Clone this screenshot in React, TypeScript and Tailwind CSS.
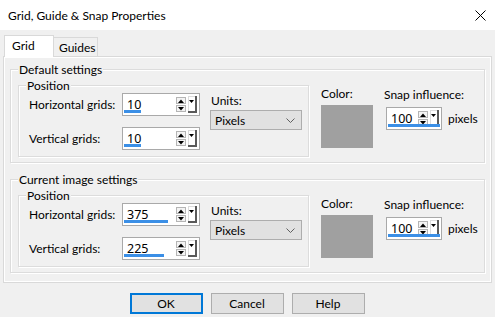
import React from "react";

const FONT = "font-['Lato',_'Liberation_Sans',_sans-serif]";

function UpDown() {
  return (
    <div className="flex flex-col gap-[1px] pt-[3px]">
      <div className="flex h-[7px] w-[10px] items-center justify-center border border-[#b5b5b5] bg-[#f4f4f4]">
        <svg width="6" height="4" viewBox="0 0 6 4"><path d="M0 4 L3 0.5 L6 4 Z" fill="#000" /></svg>
      </div>
      <div className="flex h-[7px] w-[10px] items-center justify-center border border-[#b5b5b5] bg-[#f4f4f4]">
        <svg width="6" height="4" viewBox="0 0 6 4"><path d="M0 0 L3 3.5 L6 0 Z" fill="#000" /></svg>
      </div>
    </div>
  );
}

function DropBtn() {
  return (
    <div className="mt-[2px] flex h-[17px] w-[9px] items-start justify-center border-b-2 border-r-2 border-[#5a5a5a] bg-white pt-[4px] shadow-[inset_1px_1px_0_#dcdcdc]">
      <svg width="5" height="3" viewBox="0 0 5 3"><path d="M0 0 L2.5 3 L5 0 Z" fill="#000" /></svg>
    </div>
  );
}

function Spin({ value, w, bar }: { value: string; w: string; bar: string }) {
  return (
    <div className={`relative flex h-[23px] shrink-0 items-start border border-[#a9a9a9] bg-white pr-[2px] ${w}`}>
      <div className="flex-1 pl-[4px] pt-[3px] font-['Noto_Sans',_sans-serif] text-[12.5px] leading-[16px] text-black">{value}</div>
      <UpDown />
      <div className="w-[2px]" />
      <DropBtn />
      <div className={`absolute bottom-[2px] left-[1px] h-[3px] bg-[#3b8fe6] ${bar}`} />
    </div>
  );
}

function Group({ title, children, className = "" }: { title: string; children: React.ReactNode; className?: string }) {
  return (
    <div className={`border border-[#dcdcdc] shadow-[inset_1px_1px_0_#fff,1px_1px_0_#fff] ${className}`}>
      <div className="-mt-[8px] ml-[7px] flex">
        <span className="whitespace-nowrap bg-[#f0f0f0] px-[1px] text-[12px] leading-[15px]">{title}</span>
      </div>
      {children}
    </div>
  );
}

function Settings({ title, h, v, hb, vb }: { title: string; h: string; v: string; hb: string; vb: string }) {
  return (
    <Group title={title} className="h-[94px]">
      <div className="flex">
        <Group title="Position" className="ml-[7px] mt-[8px] h-[72px] w-[291px] shrink-0">
          <div className="flex pl-[10px]">
            <div className="flex flex-col">
              <div className="flex items-center">
                <span className="w-[93px] whitespace-nowrap text-[12px] leading-[15px]">Horizontal grids:</span>
                <Spin value={h} w="w-[78px]" bar={hb} />
              </div>
              <div className="mt-[11px] flex items-center">
                <span className="w-[93px] whitespace-nowrap text-[12px] leading-[15px]">Vertical grids:</span>
                <Spin value={v} w="w-[78px]" bar={vb} />
              </div>
            </div>
            <div className="ml-[10px] flex flex-col">
              <div className="h-[17px] pl-[1px] text-[12px] leading-[15px]">Units:</div>
              <div className="flex h-[20px] w-[92px] items-center justify-between border border-[#adadad] bg-[#e1e1e1] pl-[4px] pr-[6px]">
                <span className="text-[12px] leading-[15px]">Pixels</span>
                <svg width="9" height="5" viewBox="0 0 9 5"><path d="M0.5 0.5 L4.5 4.5 L8.5 0.5" fill="none" stroke="#606060" strokeWidth="1" /></svg>
              </div>
            </div>
          </div>
        </Group>
        <div className="ml-[12px] mt-[9px] flex flex-col">
          <div className="h-[19px] text-[12px] leading-[15px]">Color:</div>
          <div className="h-[43px] w-[52px] bg-[#a0a0a0]" />
        </div>
        <div className="ml-[11px] mt-[10px] flex flex-col">
          <div className="h-[20px] whitespace-nowrap text-[12px] leading-[15px]">Snap influence:</div>
          <div className="ml-[2px] flex items-center">
            <Spin value="100" w="w-[56px]" bar="w-[52px]" />
            <span className="ml-[6px] text-[12px] leading-[15px]">pixels</span>
          </div>
        </div>
      </div>
    </Group>
  );
}

function Button({ label, primary }: { label: string; primary?: boolean }) {
  return (
    <div
      className={`flex h-[21px] w-[73px] items-center justify-center bg-[#e1e1e1] text-[12px] leading-[15px] ${
        primary ? "border-2 border-[#0078d7]" : "border border-[#adadad]"
      }`}
    >
      {label}
    </div>
  );
}

export default function App() {
  return (
    <div className={`flex h-[317px] w-[495px] flex-col bg-[#f0f0f0] text-black ${FONT}`}>
      <div className="flex h-[30px] items-center justify-between bg-white pl-[8px] pr-[9px]">
        <span className="text-[12px] leading-[15px]">Grid, Guide &amp; Snap Properties</span>
        <svg width="11" height="11" viewBox="0 0 11 11">
          <path d="M0.5 0.5 L10.5 10.5 M10.5 0.5 L0.5 10.5" stroke="#000" strokeWidth="1" />
        </svg>
      </div>
      <div className="flex h-[26px] items-end pl-[4px]">
        <div className="-mb-[1px] z-10 flex h-[22px] w-[50px] items-start border border-b-0 border-[#d9d9d9] bg-white pl-[7px] pt-[2px] text-[12px] leading-[15px]">
          Grid
        </div>
        <div className="flex h-[19px] w-[44px] items-start border border-b-0 border-l-0 border-[#d9d9d9] bg-[#f0f0f0] pl-[5px] pt-[2px] text-[12px] leading-[15px]">
          Guides
        </div>
      </div>
      <div className="mx-[3px] flex h-[227px] flex-col border border-[#d9d9d9] px-[6px] pt-[12px] shadow-[inset_1px_1px_0_#fff,inset_-1px_-1px_0_#fff]">
        <Settings title="Default settings" h="10" v="10" hb="w-[17px]" vb="w-[17px]" />
        <div className="h-[16px]" />
        <Settings title="Current image settings" h="375" v="225" hb="w-[44px]" vb="w-[40px]" />
      </div>
      <div className="mt-[10px] flex justify-center gap-[8px] pr-[1px]">
        <Button label="OK" primary />
        <Button label="Cancel" />
        <Button label="Help" />
      </div>
    </div>
  );
}
